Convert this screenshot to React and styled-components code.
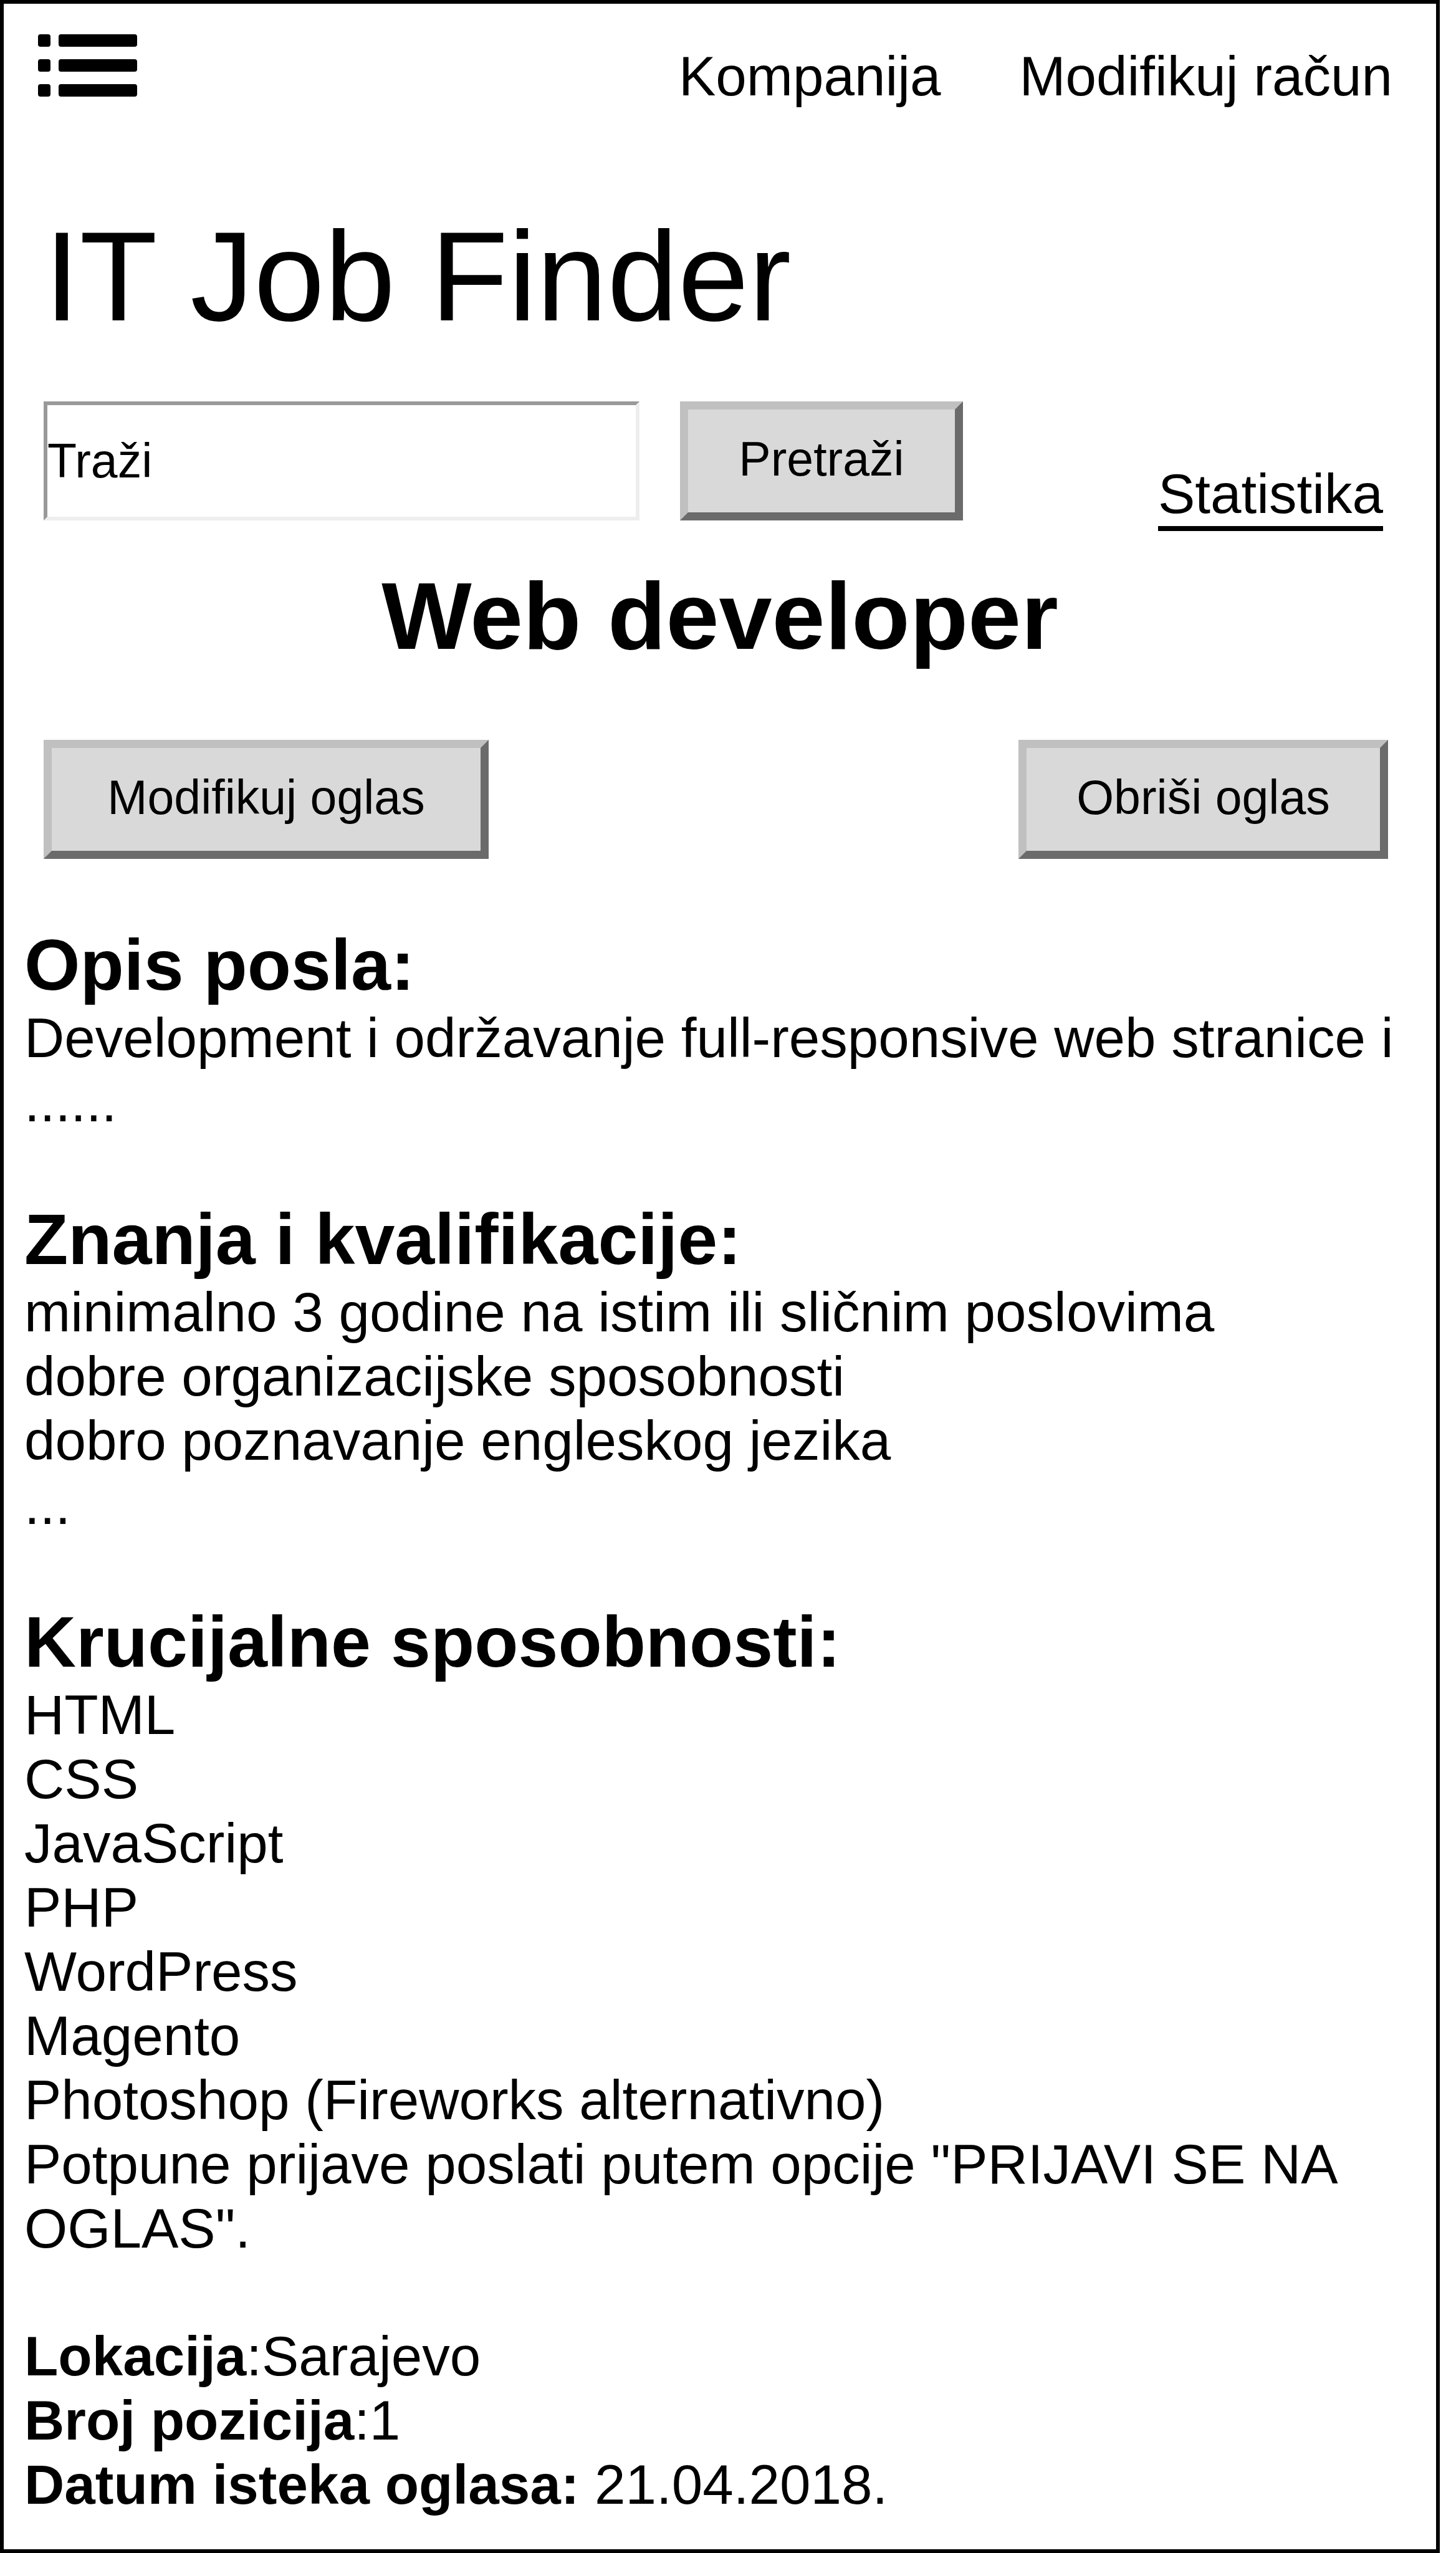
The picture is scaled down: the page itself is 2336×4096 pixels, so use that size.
import React from "react";
import styled, { createGlobalStyle } from "styled-components";

const Global = createGlobalStyle`
  *, *::before, *::after { box-sizing: border-box; }
  body { margin: 0; background: #fff; }
`;

const Page = styled.div`
  min-height: 100vh;
  margin-right: 26px;
  border: 6px solid #000;
  background: #fff;
  color: #000;
  font-family: "Liberation Sans", Arial, sans-serif;
  font-size: 89px;
  line-height: 103px;
`;

const TopBar = styled.header`
  display: flex;
  justify-content: space-between;
  align-items: flex-start;
  padding: 49px 70px 0 55px;
`;

const MenuButton = styled.button`
  display: block;
  padding: 0;
  border: 0;
  background: none;
  cursor: pointer;
  svg { display: block; }
`;

const Nav = styled.nav`
  display: flex;
  gap: 126px;
  padding-top: 16px;
`;

const NavLink = styled.a`
  color: inherit;
  text-decoration: none;
`;

const SiteTitle = styled.p`
  margin: 152px 65px 0;
  font-size: 204px;
  line-height: 234px;
`;

const SearchRow = styled.form`
  display: flex;
  align-items: flex-start;
  margin: 84px 85px 0 64px;
`;

const SearchInput = styled.input`
  flex: 0 1 956px;
  min-width: 0;
  height: 191px;
  margin: 0 65px 0 0;
  padding: 0;
  border: 6px solid;
  border-color: #999 #eee #eee #999;
  background: #fff;
  color: #000;
  font: 77px "Liberation Sans", Arial, sans-serif;
`;

const Button = styled.button`
  height: 191px;
  padding: 0 0 6px;
  width: ${(p) => p.$width}px;
  border: 13px solid;
  border-color: #c0c0c0 #6b6b6b #6b6b6b #c0c0c0;
  background: #d9d9d9;
  color: #000;
  font: 77px "Liberation Sans", Arial, sans-serif;
  white-space: nowrap;
  cursor: pointer;
`;

const StatsLink = styled.a`
  margin: 97px 0 0 auto;
  border-bottom: 8px solid #000;
  color: inherit;
  text-decoration: none;
`;

const JobTitle = styled.h1`
  margin: 48px 0 0;
  font-size: 153px;
  line-height: 176px;
  text-align: center;
`;

const Actions = styled.div`
  display: flex;
  justify-content: space-between;
  margin: 111px 77px 0 64px;
  padding-bottom: 2px;
`;

const Section = styled.section`
  padding: 0 33px;
  margin-top: 102px;
`;

const Heading = styled.h2`
  margin: 0;
  font-size: 115px;
  line-height: 132px;
`;

const Lines = styled.ul`
  margin: 0;
  padding: 0;
  list-style: none;
`;

const Text = styled.p`
  margin: 0;
`;

const qualifications = [
  "minimalno 3 godine na istim ili sličnim poslovima",
  "dobre organizacijske sposobnosti",
  "dobro poznavanje engleskog jezika",
  "...",
];

const skills = [
  "HTML",
  "CSS",
  "JavaScript",
  "PHP",
  "WordPress",
  "Magento",
  "Photoshop (Fireworks alternativno)",
];

function ListIcon() {
  return (
    <svg width="160" height="100" viewBox="0 0 160 100" aria-hidden="true">
      {[0, 40, 80].map((y) => (
        <g key={y}>
          <rect x="0" y={y} width="20" height="20" rx="4" />
          <rect x="33" y={y} width="126" height="20" rx="4" />
        </g>
      ))}
    </svg>
  );
}

export default function App() {
  return (
    <Page>
      <Global />
      <TopBar>
        <MenuButton type="button" aria-label="Meni">
          <ListIcon />
        </MenuButton>
        <Nav>
          <NavLink href="#kompanija">Kompanija</NavLink>
          <NavLink href="#racun">Modifikuj račun</NavLink>
        </Nav>
      </TopBar>
      <SiteTitle>IT Job Finder</SiteTitle>
      <SearchRow onSubmit={(e) => e.preventDefault()}>
        <SearchInput type="text" aria-label="Traži" defaultValue="Traži" />
        <Button type="submit" $width={454}>Pretraži</Button>
        <StatsLink href="#statistika">Statistika</StatsLink>
      </SearchRow>
      <main>
        <JobTitle>Web developer</JobTitle>
        <Actions>
          <Button type="button" $width={714}>Modifikuj oglas</Button>
          <Button type="button" $width={593}>Obriši oglas</Button>
        </Actions>
        <Section>
          <Heading>Opis posla:</Heading>
          <Text>Development i održavanje full-responsive web stranice i ......</Text>
        </Section>
        <Section>
          <Heading>Znanja i kvalifikacije:</Heading>
          <Lines>
            {qualifications.map((q) => <li key={q}>{q}</li>)}
          </Lines>
        </Section>
        <Section>
          <Heading>Krucijalne sposobnosti:</Heading>
          <Lines>
            {skills.map((s) => <li key={s}>{s}</li>)}
          </Lines>
          <Text>Potpune prijave poslati putem opcije "PRIJAVI SE NA OGLAS".</Text>
        </Section>
        <Section>
          <Text><b>Lokacija</b>:Sarajevo</Text>
          <Text><b>Broj pozicija</b>:1</Text>
          <Text><b>Datum isteka oglasa:</b> 21.04.2018.</Text>
        </Section>
      </main>
    </Page>
  );
}
